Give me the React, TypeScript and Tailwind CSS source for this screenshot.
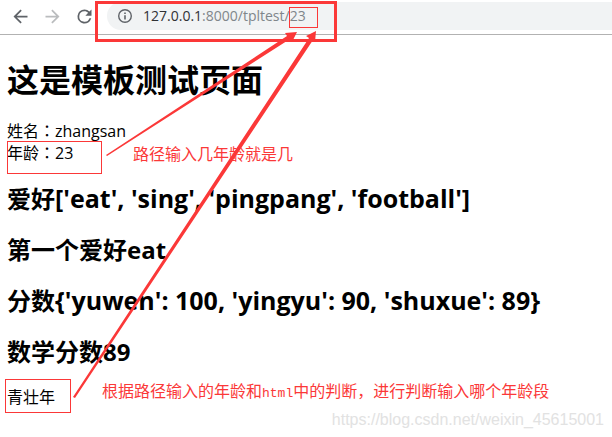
const person = {
  name: 'zhangsan',
  age: 23,
  hobbies: "['eat', 'sing', 'pingpang', 'football']",
  firstHobby: 'eat',
  scores: "{'yuwen': 100, 'yingyu': 90, 'shuxue': 89}",
  mathScore: 89,
}

const Colon = () => <span className="font-['Noto_Sans_CJK_TC',sans-serif] leading-none">：</span>

const BackIcon = () => (
  <svg viewBox="0 0 24 24" className="size-[21px]" fill="#5f6368" aria-hidden="true">
    <path d="M20 11H7.83l5.59-5.59L12 4l-8 8 8 8 1.41-1.41L7.83 13H20z" />
  </svg>
)

const ForwardIcon = () => (
  <svg viewBox="0 0 24 24" className="size-[21px]" fill="#babcbe" aria-hidden="true">
    <path d="M12 4l-1.41 1.41L16.17 11H4v2h12.17l-5.58 5.59L12 20l8-8z" />
  </svg>
)

const ReloadIcon = () => (
  <svg viewBox="0 0 24 24" className="size-[21px]" fill="#5f6368" aria-hidden="true">
    <path d="M17.65 6.35A7.96 7.96 0 0 0 12 4a8 8 0 1 0 7.73 10h-2.08A6 6 0 1 1 12 6c1.66 0 3.14.69 4.22 1.78L13 11h7V4z" />
  </svg>
)

const InfoIcon = () => (
  <svg viewBox="0 0 16 16" className="size-4" aria-hidden="true">
    <circle cx="8" cy="8" r="6.3" fill="none" stroke="#5f6368" strokeWidth="1.4" />
    <path d="M7.2 4.4h1.6v1.6H7.2zM7.2 7.2h1.6v4.4H7.2z" fill="#5f6368" />
  </svg>
)

const Toolbar = () => (
  <header className="flex h-[35px] items-start border-b border-[#b2b2b2] bg-white pt-0.5 pl-2.5">
    <div className="flex h-7 w-[97px] shrink-0 items-center gap-[11px]">
      <button type="button" aria-label="Back">
        <BackIcon />
      </button>
      <button type="button" aria-label="Forward">
        <ForwardIcon />
      </button>
      <button type="button" aria-label="Reload">
        <ReloadIcon />
      </button>
    </div>
    <div className="flex h-7 flex-1 items-center gap-2.5 rounded-l-full bg-[#f1f3f4] pl-2.5">
      <InfoIcon />
      <a href="#" className="text-sm text-[#80868b]">
        <span className="text-[#303134]">127.0.0.1</span>:8000/tpltest/23
      </a>
    </div>
  </header>
)

const Annotations = () => (
  <div className="pointer-events-none absolute inset-0 text-base leading-5 text-[#fb3838]">
    <div className="absolute top-px left-[95px] h-[41px] w-[242px] border-3 border-[#fb3838]" />
    <div className="absolute top-[7px] left-[289px] h-[21px] w-[29px] border border-[#fb3838]" />
    <div className="absolute top-[141px] left-[7px] h-[33px] w-[95px] border border-[#fb3838]" />
    <div className="absolute top-[379px] left-[5px] h-[34px] w-[66px] border border-[#fb3838]" />
    <svg className="absolute top-0 left-0" width="612" height="437" fill="#fb3838" aria-hidden="true">
      <path d="M106 155L287 36L285 33L297 32L292 42L290 39L107 156Z" />
      <path d="M73 397L309 38L306 36L316 31L315 42L313 40L75 398Z" />
    </svg>
    <p className="absolute top-[144px] left-[133px] whitespace-nowrap">路径输入几年龄就是几</p>
    <p className="absolute top-[381px] left-[102px] whitespace-nowrap">
      根据路径输入的年龄和
      <span className="font-['Liberation_Mono',monospace] text-[13px]">html</span>
      中的判断，进行判断输入哪个年龄段
    </p>
  </div>
)

export default function App() {
  return (
    <div className="relative overflow-hidden bg-white font-['Open_Sans','Noto_Sans_CJK_SC',sans-serif] text-black">
      <Toolbar />
      <main className="px-[7px] pt-6">
        <h1 className="text-[32px] leading-[42px] font-bold">这是模板测试页面</h1>
        <div className="mt-[19px] text-base leading-[22px]">
          <p>
            姓名
            <Colon />
            {person.name}
          </p>
          <p>
            年龄
            <Colon />
            {person.age}
          </p>
        </div>
        <div className="mt-[19px] flex flex-col gap-5 text-2xl leading-[31px] font-bold whitespace-nowrap">
          <h2>
            爱好<span className="text-[25px] leading-none">{person.hobbies}</span>
          </h2>
          <h2>第一个爱好{person.firstHobby}</h2>
          <h2>
            分数<span className="text-[25px] leading-none">{person.scores}</span>
          </h2>
          <h2>数学分数{person.mathScore}</h2>
        </div>
        <p className="mt-[19px] text-base leading-[22px]">青壮年</p>
      </main>
      <footer className="flex justify-end pr-2">
        <p className="font-['Liberation_Sans',sans-serif] text-base leading-6 text-[#e2e2e2]">
          https://blog.csdn.net/weixin_45615001
        </p>
      </footer>
      <Annotations />
    </div>
  )
}
